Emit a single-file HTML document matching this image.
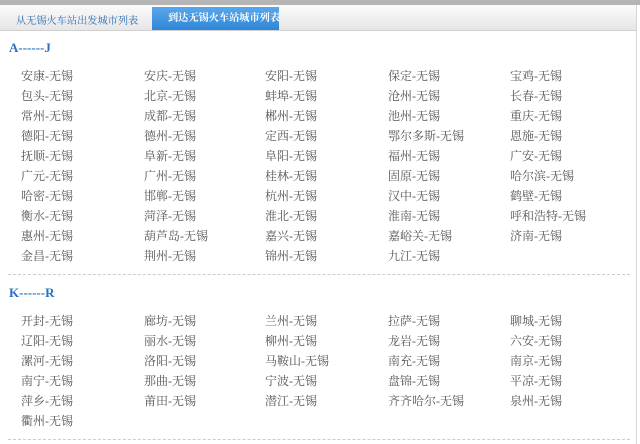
<!DOCTYPE html>
<html><head><meta charset="utf-8"><style>
body{margin:0;width:640px;height:444px;overflow:hidden;background:#fff;font-family:"Liberation Serif","Noto Serif CJK SC",serif;}
.top{position:absolute;left:0;top:0;width:640px;height:5px;background:#b5b5b5;}
.bar{position:absolute;left:0;top:5px;width:636px;height:25px;background:linear-gradient(#fbfbfb,#e6e6e6);border-bottom:1px solid #d0d0d0;}
.rb{position:absolute;left:636px;top:5px;width:1px;height:439px;background:#d6d6d6;}
.t1{position:absolute;left:16px;top:12px;font-size:10.2px;color:#2a6cb0;}
.t2{position:absolute;left:152px;top:7px;width:127px;height:23px;background:linear-gradient(#5aa7ea,#2f86d8);color:#fff;font-size:10.2px;font-weight:bold;line-height:23px;text-indent:16px;overflow:hidden;white-space:nowrap;}
.h{position:absolute;left:9px;font-size:13px;font-weight:bold;color:#2a72c0;}
.c{position:absolute;font-size:12px;color:#555;white-space:nowrap;}
.d{position:absolute;left:8px;width:622px;border-top:1px dashed #ccc;}
</style></head><body>
<div class="top"></div><div class="bar"></div><div class="rb"></div>
<div class="t1">从无锡火车站出发城市列表</div>
<div class="t2">到达无锡火车站城市列表</div>
<div class="h" style="top:40px">A------J</div>
<div class="d" style="top:274px"></div>
<div class="h" style="top:285px">K------R</div>
<div class="d" style="top:439px"></div>
<div id="g"></div>
<script>
var a=["安康","安庆","安阳","保定","宝鸡","包头","北京","蚌埠","沧州","长春","常州","成都","郴州","池州","重庆","德阳","德州","定西","鄂尔多斯","恩施","抚顺","阜新","阜阳","福州","广安","广元","广州","桂林","固原","哈尔滨","哈密","邯郸","杭州","汉中","鹤壁","衡水","菏泽","淮北","淮南","呼和浩特","惠州","葫芦岛","嘉兴","嘉峪关","济南","金昌","荆州","锦州","九江"];
var b=["开封","廊坊","兰州","拉萨","聊城","辽阳","丽水","柳州","龙岩","六安","漯河","洛阳","马鞍山","南充","南京","南宁","那曲","宁波","盘锦","平凉","萍乡","莆田","潜江","齐齐哈尔","泉州","衢州"];
var xs=[21,144,265,388,510],h="";
function put(l,y0){l.forEach(function(n,i){h+='<div class="c" style="left:'+xs[i%5]+'px;top:'+(y0+Math.floor(i/5)*20)+'px">'+n+'-无锡</div>';});}
put(a,67);put(b,312);
document.getElementById("g").innerHTML=h;
</script>
</body></html>
